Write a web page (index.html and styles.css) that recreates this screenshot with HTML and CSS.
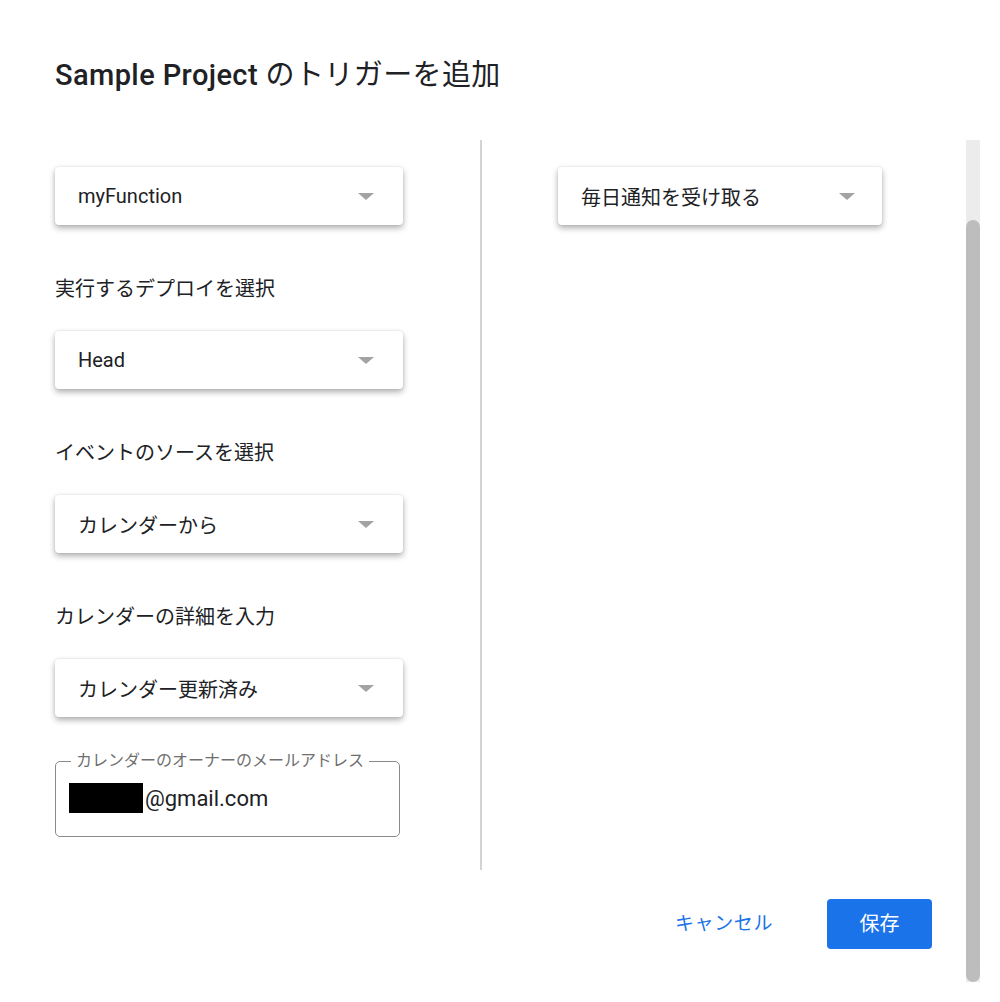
FILE: index.html
```html
<!DOCTYPE html>
<html lang="ja">
<head>
<meta charset="utf-8">
<link rel="stylesheet" href="styles.css">
</head>
<body>
<div class="dialog">
  <h1 class="title"><span class="title-en">Sample Project</span> のトリガーを追加</h1>
  <div class="scroll-row">
    <div class="content">
      <div class="columns">
        <div class="col-left">
          <div class="select"><span>myFunction</span><i class="arrow"></i></div>
          <div class="label">実行するデプロイを選択</div>
          <div class="select"><span>Head</span><i class="arrow"></i></div>
          <div class="label">イベントのソースを選択</div>
          <div class="select"><span>カレンダーから</span><i class="arrow"></i></div>
          <div class="label">カレンダーの詳細を入力</div>
          <div class="select"><span>カレンダー更新済み</span><i class="arrow"></i></div>
          <fieldset class="field">
            <legend>カレンダーのオーナーのメールアドレス</legend>
            <div class="field-value"><span class="redact"></span>@gmail.com</div>
          </fieldset>
        </div>
        <div class="divider"></div>
        <div class="col-right">
          <div class="select select-wide"><span>毎日通知を受け取る</span><i class="arrow"></i></div>
        </div>
      </div>
      <div class="footer">
        <button class="btn-text">キャンセル</button>
        <button class="btn-primary">保存</button>
      </div>
    </div>
    <div class="scrollbar"><div class="thumb"></div></div>
  </div>
</div>
</body>
</html>
```
FILE: styles.css
```css
* { box-sizing: border-box; }
html, body { margin: 0; padding: 0; background: #fff; }
body {
  font-family: Roboto, "Noto Sans CJK JP", sans-serif;
  color: #202124;
  width: 1000px;
  height: 1002px;
  overflow: hidden;
}
.dialog { display: flex; flex-direction: column; height: 1002px; }
.title {
  margin: 0;
  padding: 56px 0 0 55px;
  height: 140px;
  font-size: 29px;
  font-weight: 400;
  line-height: 38px;
  letter-spacing: 0.4px;
  color: #202124;
  font-family: Roboto, "Noto Sans CJK JP", sans-serif;
}
.title-en { font-weight: 500; font-size: 29px; font-family: Roboto, sans-serif; }
.scroll-row { display: flex; flex: 1; }
.content { flex: 0 0 966px; display: flex; flex-direction: column; }
.columns { display: flex; height: 730px; }
.col-left { width: 480px; padding: 27px 0 0 55px; }
.divider { width: 2px; background: #d3d3d6; }
.col-right { flex: 1; padding: 27px 0 0 76px; }
.select {
  width: 348px;
  height: 58px;
  border-radius: 4px;
  background: #fff;
  box-shadow: 0 3px 6px rgba(0,0,0,0.32), 0 0 2px rgba(0,0,0,0.1);
  display: flex;
  align-items: center;
  justify-content: space-between;
  padding: 0 29px 0 23px;
  font-size: 20px;
  color: #202124;
}
.select-wide { width: 324px; padding-right: 27px; }
.arrow {
  width: 0; height: 0;
  border-left: 8px solid transparent;
  border-right: 8px solid transparent;
  border-top: 7px solid #a3a3a3;
  margin-top: 1px;
}
.label {
  font-size: 20px;
  line-height: 28px;
  margin: 50px 0 28px;
  color: #202124;
}
.field {
  margin: 34px 0 0;
  width: 345px;
  height: 86px;
  border: 1.5px solid #8a8a8a;
  border-radius: 5px;
  padding: 0 0 0 13px;
}
.field legend {
  font-size: 16px;
  color: #6f6f6f;
  padding: 0 5px;
  margin-left: 2px;
  line-height: 20px;
}
.field-value {
  display: flex;
  align-items: center;
  font-size: 22px;
  color: #202124;
  margin-top: 12px;
}
.redact { display: inline-block; width: 74px; height: 30px; background: #000; margin-right: 2px; }
.footer {
  display: flex;
  justify-content: flex-end;
  align-items: center;
  gap: 54px;
  padding: 29px 34px 0 0;
}
.btn-text {
  border: 0;
  background: none;
  font: inherit;
  font-size: 19px;
  line-height: 20px;
  color: #1a73e8;
  padding: 0;
  letter-spacing: 0.6px;
}
.btn-primary {
  border: 0;
  width: 105px;
  height: 50px;
  border-radius: 4px;
  background: #1a73e8;
  color: #fff;
  font: inherit;
  font-size: 20px;
  line-height: 20px;
  padding: 0 0 1px;
}
.scrollbar {
  width: 14px;
  height: 842px;
  background: #ececec;
  position: relative;
}
.thumb {
  position: absolute;
  left: 0; right: 0;
  top: 80px;
  bottom: 0;
  background: #bdbdbd;
  border-radius: 7px;
}
```
